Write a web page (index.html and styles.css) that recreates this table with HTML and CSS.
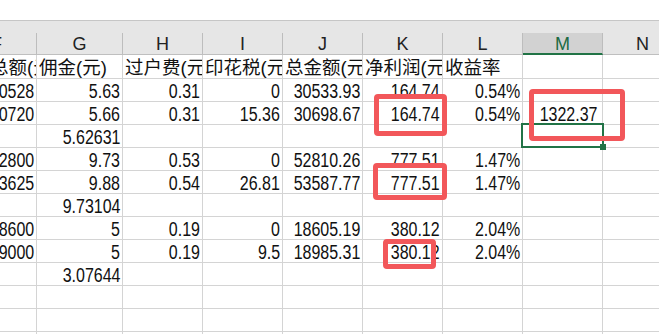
FILE: index.html
```html
<!DOCTYPE html>
<html lang="zh">
<head>
<meta charset="utf-8">
<title>Sheet</title>
<link rel="stylesheet" href="styles.css">
</head>
<body>
<div class="page">
  <div class="topstrip"></div>
  <div class="colbar">
    <div class="heads">
      <div class="hc">F</div>
      <div class="hc">G</div>
      <div class="hc">H</div>
      <div class="hc">I</div>
      <div class="hc">J</div>
      <div class="hc">K</div>
      <div class="hc">L</div>
      <div class="hc hc-sel">M</div>
      <div class="hc">N</div>
    </div>
  </div>
  <div class="grid">
    <div class="c t shift">成交总额(元)</div><div class="c t">佣金(元)</div><div class="c t">过户费(元)</div><div class="c t">印花税(元)</div><div class="c t">总金额(元)</div><div class="c t">净利润(元)</div><div class="c t">收益率</div><div class="c t"></div><div class="c t"></div>

    <div class="c"><span class="v">30528</span></div><div class="c"><span class="v">5.63</span></div><div class="c"><span class="v">0.31</span></div><div class="c"><span class="v">0</span></div><div class="c"><span class="v">30533.93</span></div><div class="c"><span class="v">164.74</span></div><div class="c"><span class="v">0.54%</span></div><div class="c"></div><div class="c"></div>

    <div class="c"><span class="v">30720</span></div><div class="c"><span class="v">5.66</span></div><div class="c"><span class="v">0.31</span></div><div class="c"><span class="v">15.36</span></div><div class="c"><span class="v">30698.67</span></div><div class="c"><span class="v">164.74</span></div><div class="c"><span class="v">0.54%</span></div><div class="c wide-pad"><span class="v">1322.37</span></div><div class="c"></div>

    <div class="c"></div><div class="c"><span class="v">5.62631</span></div><div class="c"></div><div class="c"></div><div class="c"></div><div class="c"></div><div class="c"></div><div class="c"></div><div class="c"></div>

    <div class="c"><span class="v">52800</span></div><div class="c"><span class="v">9.73</span></div><div class="c"><span class="v">0.53</span></div><div class="c"><span class="v">0</span></div><div class="c"><span class="v">52810.26</span></div><div class="c"><span class="v">777.51</span></div><div class="c"><span class="v">1.47%</span></div><div class="c"></div><div class="c"></div>

    <div class="c"><span class="v">53625</span></div><div class="c"><span class="v">9.88</span></div><div class="c"><span class="v">0.54</span></div><div class="c"><span class="v">26.81</span></div><div class="c"><span class="v">53587.77</span></div><div class="c"><span class="v">777.51</span></div><div class="c"><span class="v">1.47%</span></div><div class="c"></div><div class="c"></div>

    <div class="c"></div><div class="c"><span class="v">9.73104</span></div><div class="c"></div><div class="c"></div><div class="c"></div><div class="c"></div><div class="c"></div><div class="c"></div><div class="c"></div>

    <div class="c"><span class="v">18600</span></div><div class="c"><span class="v">5</span></div><div class="c"><span class="v">0.19</span></div><div class="c"><span class="v">0</span></div><div class="c"><span class="v">18605.19</span></div><div class="c"><span class="v">380.12</span></div><div class="c"><span class="v">2.04%</span></div><div class="c"></div><div class="c"></div>

    <div class="c"><span class="v">19000</span></div><div class="c"><span class="v">5</span></div><div class="c"><span class="v">0.19</span></div><div class="c"><span class="v">9.5</span></div><div class="c"><span class="v">18985.31</span></div><div class="c"><span class="v">380.12</span></div><div class="c"><span class="v">2.04%</span></div><div class="c"></div><div class="c"></div>

    <div class="c"></div><div class="c"><span class="v">3.07644</span></div><div class="c"></div><div class="c"></div><div class="c"></div><div class="c"></div><div class="c"></div><div class="c"></div><div class="c"></div>

    <div class="c"></div><div class="c"></div><div class="c"></div><div class="c"></div><div class="c"></div><div class="c"></div><div class="c"></div><div class="c"></div><div class="c"></div>

    <div class="c"></div><div class="c"></div><div class="c"></div><div class="c"></div><div class="c"></div><div class="c"></div><div class="c"></div><div class="c"></div><div class="c"></div>

    <div class="c"></div><div class="c"></div><div class="c"></div><div class="c"></div><div class="c"></div><div class="c"></div><div class="c"></div><div class="c"></div><div class="c"></div>
  </div>

  <div class="sel"><span class="handle"></span></div>
  <div class="mark mark-1"></div>
  <div class="mark mark-2"></div>
  <div class="mark mark-3"></div>
  <div class="mark mark-4"></div>
</div>
</body>
</html>
```

FILE: styles.css
```css
html, body {
  margin: 0;
  padding: 0;
  background: #ffffff;
}

.page {
  position: relative;
  width: 659px;
  height: 334px;
  overflow: hidden;
  font-family: "Liberation Sans", "Noto Sans CJK SC", sans-serif;
  color: #111111;
}

.topstrip {
  height: 20px;
  background: #ffffff;
}

.colbar {
  border-top: 1px solid #c6c6c6;
  background: #e6e6e6;
  padding-top: 12px;
  margin-left: -43px;
  width: 726px;
}

.heads {
  display: grid;
  grid-template-columns: 80px 86px repeat(7, 80px);
  height: 22px;
}

.hc {
  box-sizing: border-box;
  height: 22px;
  border-right: 1px solid #bdbdbd;
  border-bottom: 1px solid #bfbfbf;
  font-size: 18px;
  line-height: 22px;
  text-align: center;
  color: #222222;
  overflow: hidden;
}

.hc-sel {
  background: #d2d2d2;
  color: #1d6b43;
  border-bottom: 2px solid #217346;
}

.grid {
  display: grid;
  grid-template-columns: 80px 86px repeat(7, 80px);
  grid-template-rows: 24px repeat(12, 23px);
  margin-left: -43px;
  width: 726px;
}

.c {
  box-sizing: border-box;
  display: flex;
  justify-content: flex-end;
  align-items: flex-start;
  border-right: 1px solid #d4d4d4;
  border-bottom: 1px solid #d4d4d4;
  overflow: hidden;
  white-space: nowrap;
  font-size: 19.5px;
  line-height: 24px;
  padding: 0 2px;
}

.v {
  display: inline-block;
  flex-shrink: 0;
  transform: scaleX(0.82);
  transform-origin: 100% 50%;
}

.t {
  display: block;
  text-align: left;
  font-size: 18.5px;
  line-height: 25px;
  padding-left: 2px;
}

.shift {
  text-indent: -6px;
}

.wide-pad {
  padding-right: 5px;
}

.sel {
  position: absolute;
  left: 521px;
  top: 123px;
  width: 83px;
  height: 25px;
  box-sizing: border-box;
  border: 2px solid #217346;
}

.handle {
  position: absolute;
  right: -4px;
  bottom: -4px;
  width: 6px;
  height: 6px;
  background: #217346;
}

.mark {
  position: absolute;
  box-sizing: border-box;
  border: 5px solid #f2575a;
  border-radius: 4px;
}

.mark-1 { left: 374px; top: 94px; width: 73px; height: 42px; }
.mark-2 { left: 529px; top: 89px; width: 96px; height: 52px; }
.mark-3 { left: 373px; top: 163px; width: 74px; height: 37px; }
.mark-4 { left: 383px; top: 239px; width: 53px; height: 30px; }
```
